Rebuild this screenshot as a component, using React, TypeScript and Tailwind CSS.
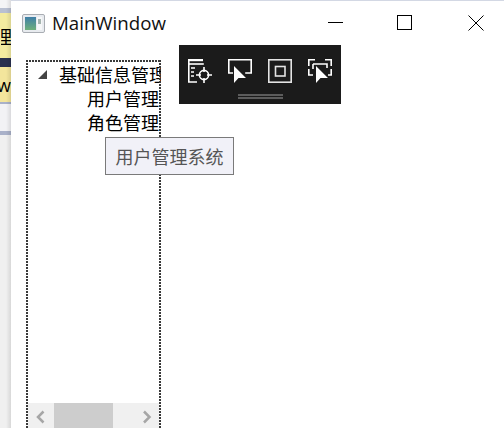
import React from "react";

const cjkFont = "font-['Noto_Sans_CJK_SC',sans-serif]";

const DebugToolbar: React.FC = () => (
  <div className="absolute left-[179px] top-[45px] w-[162px] h-[59px] bg-[#1b1b1b] flex flex-col items-center">
    <div className="flex gap-[16px] mt-[14px]">
      <svg width="24" height="24" viewBox="0 0 24 24" fill="none" stroke="#fff" strokeWidth="1.6">
        <path d="M0 1h15" strokeWidth="2.4" />
        <path d="M.8 1v22H9" />
        <path d="M.8 5h15" />
        <path d="M3 9h4M3 13h3M3 17h3" />
        <circle cx="16" cy="16" r="4.6" />
        <path d="M16 8v5M16 19v5M8 16h5M19 16h5" />
      </svg>
      <svg width="24" height="24" viewBox="0 0 24 24" fill="none" stroke="#fff" strokeWidth="1.6">
        <path d="M5 14H.8V.8h22.4V14h-6" />
        <path d="M6 7v17l4.5-5H18z" fill="#fff" stroke="none" />
      </svg>
      <svg width="24" height="24" viewBox="0 0 24 24" fill="none" stroke="#e4e4e4" strokeWidth="1.6">
        <rect x=".8" y=".8" width="22.4" height="22.4" />
        <rect x="7.5" y="7.5" width="9.5" height="9.5" />
      </svg>
      <svg width="24" height="24" viewBox="0 0 24 24" fill="none" stroke="#fff" strokeWidth="1.6">
        <path d="M.8 7V.8H7M17 .8h6.200V7M23.200 10v6H20M.8 10v6H5M5 5h14v4M5 5v5" />
        <path d="M8 7v17l4.500-5H20z" fill="#fff" stroke="none" />
      </svg>
    </div>
    <div className="mt-[11px] w-[45px] h-[5px] border-y-2 border-[#5c5c5c]" />
  </div>
);

export default function App() {
  return (
    <div className="relative w-[504px] h-[428px] overflow-hidden bg-white text-black">
      {/* desktop behind the window */}
      <div className="absolute left-0 top-0 w-[11px] h-full flex flex-col bg-[#f0f0f0] overflow-hidden">
        <div className="h-[8px] bg-[#f4f4f6]" />
        <div className="h-[5px] bg-[#b9c0d2]" />
        <div className="h-[45px] bg-[#f3eba0] flex items-center justify-end">
          <span className={`${cjkFont} text-[18px] leading-none whitespace-nowrap mr-[-1px] w-[11px] overflow-hidden [direction:rtl]`}>理</span>
        </div>
        <div className="h-[9px] bg-[#29304f]" />
        <div className="h-[35px] bg-[#f3e59c] flex items-center justify-end overflow-hidden">
          <span className="font-['Open_Sans',sans-serif] text-[18px] leading-none whitespace-nowrap">ow</span>
        </div>
        <div className="h-[2px] bg-[#a9b1c9]" />
        <div className="h-[27px] bg-[#f2f2f5]" />
        <div className="h-[4px] bg-[#a9b1c9]" />
        <div className="absolute right-0 top-0 bottom-0 w-[5px] bg-gradient-to-r from-transparent to-black/10" />
      </div>

      {/* window */}
      <div className={`absolute left-[11px] top-0 right-0 bottom-0 bg-white border-t border-[#d3d8e4] ${cjkFont}`}>
        <div className="flex items-center h-[44px] pl-[11px]">
          <svg width="23" height="19" viewBox="0 0 23 19" className="mr-[7px]">
            <defs>
              <linearGradient id="pane" x1="0" y1="0" x2="0" y2="1">
                <stop offset="0" stopColor="#3f7fa8" />
                <stop offset="1" stopColor="#6fb07a" />
              </linearGradient>
            </defs>
            <rect x="0.5" y="0.5" width="22" height="18" rx="1.5" fill="#e8ebef" stroke="#a9adb3" />
            <rect x="3" y="3" width="11" height="13" fill="url(#pane)" />
            <rect x="15" y="3" width="5" height="13" fill="#f6f7f8" />
            <rect x="16" y="5" width="3" height="5" fill="#a6b5b0" />
          </svg>
          <span className="font-['Open_Sans',sans-serif] text-[18.7px] leading-none text-[#111]">MainWindow</span>
          <div className="ml-auto flex">
            <svg width="16" height="16" viewBox="0 0 16 16" className="mr-[53px]" fill="none" stroke="#000">
              <path d="M0 7.500h15" />
            </svg>
            <svg width="16" height="16" viewBox="0 0 16 16" className="mr-[55px]" fill="none" stroke="#000">
              <rect x="0.5" y="0.5" width="14" height="14" />
            </svg>
            <svg width="16" height="16" viewBox="0 0 16 16" className="mr-[20px]" fill="none" stroke="#000">
              <path d="M0.500 0.500l15 15M15.500 0.500l-15 15" />
            </svg>
          </div>
        </div>

        {/* tree */}
        <div className="relative ml-[15px] mt-[15px] w-[135px] h-[368px] overflow-hidden text-[18px] leading-[24px]">
          <div className="flex items-center h-[24px] mt-[2px] whitespace-nowrap">
            <span className="ml-[12px] w-0 h-0 border-l-[9px] border-l-transparent border-b-[9px] border-b-[#444]" />
            <span className="ml-[12px]">基础信息管理</span>
          </div>
          <div className="pl-[61px] h-[24px] whitespace-nowrap">用户管理</div>
          <div className="pl-[61px] h-[24px] whitespace-nowrap">角色管理</div>

          <div className="absolute left-[2px] right-[2px] bottom-0 h-[25px] flex bg-[#f0f0f0]">
            <svg width="26" height="25" viewBox="0 0 26 25" fill="none" stroke="#a6a6a6" strokeWidth="2.500"><path d="M15.500 8.500l-5.500 5.500 5.500 5.500" /></svg>
            <div className="w-[59px] bg-[#cdcdcd]" />
            <svg className="ml-auto" width="24" height="25" viewBox="0 0 24 25" fill="none" stroke="#a6a6a6" strokeWidth="2.500"><path d="M9 8.500l5.500 5.500-5.500 5.500" /></svg>
          </div>

          {/* focus rectangle */}
          <div className="absolute left-0 right-0 top-0 h-[2px] bg-[repeating-linear-gradient(to_right,#3a3a3a_0,#3a3a3a_2px,transparent_2px,transparent_3px)]" />
          <div className="absolute left-0 top-0 bottom-0 w-[2px] bg-[repeating-linear-gradient(to_bottom,#3a3a3a_0,#3a3a3a_2px,transparent_2px,transparent_3px)]" />
          <div className="absolute right-0 top-0 bottom-0 w-[2px] bg-[repeating-linear-gradient(to_bottom,#3a3a3a_0,#3a3a3a_2px,transparent_2px,transparent_3px)]" />
        </div>
      </div>

      {/* tooltip */}
      <div className={`absolute left-[105px] top-[137px] w-[129px] h-[38px] border border-[#7a7a7a] bg-[#f1f1f8] text-[#555] text-[18px] flex items-center justify-center ${cjkFont}`}>
        用户管理系统
      </div>

      <DebugToolbar />
    </div>
  );
}
